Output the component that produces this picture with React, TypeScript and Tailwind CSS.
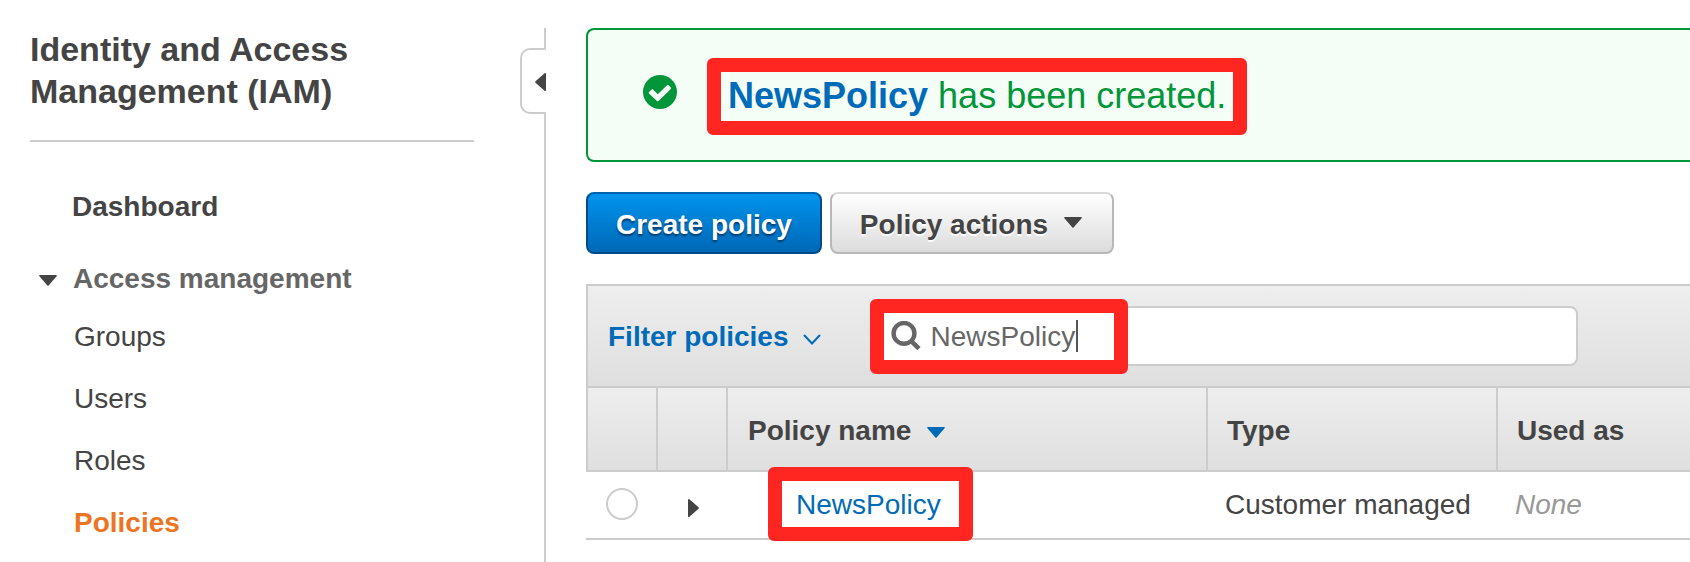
import { useState } from "react";
import clsx from "clsx";

type Direction = "down" | "left" | "right";

const NAV_ITEMS = ["Groups", "Users", "Roles", "Policies"];

const POLICIES = [{ name: "NewsPolicy", type: "Customer managed", usedAs: "None" }];

function Caret({ direction = "down", className }: { direction?: Direction; className?: string }) {
    if (direction === "down") {
        return (
            <svg aria-hidden="true" viewBox="0 0 18 11" className={clsx("h-[11px] w-[18px] shrink-0", className)} fill="currentColor">
                <path d="M0.8 0H17.2Q18.3 0.3 17.6 1.2L9.8 10.2Q9 11.2 8.2 10.2L0.4 1.2Q-0.3 0.3 0.8 0Z" />
            </svg>
        );
    }
    return (
        <svg aria-hidden="true" viewBox="0 0 11 18" className={clsx("h-[18px] w-[11px] shrink-0", direction === "left" && "rotate-180", className)} fill="currentColor">
            <path d="M0 0.6Q0.6 -0.3 1.4 0.3L10.5 8.3Q11.2 9 10.5 9.7L1.4 17.7Q0.6 18.3 0 17.4Z" />
        </svg>
    );
}

function CheckCircle() {
    return (
        <svg aria-hidden="true" viewBox="0 0 34 34" className="h-[34px] w-[34px] shrink-0">
            <circle cx="17" cy="17" r="17" fill="#009639" />
            <path
                d="M5.9 17.2L8.6 14.4Q9.3 13.8 10 14.4L14.8 19.2L24 10.2Q24.8 9.5 25.6 10.2L27.8 12.5Q28.4 13.2 27.8 13.9L15.6 26.1Q14.8 26.8 14 26.1L5.9 18.5Q5.3 17.8 5.9 17.2Z"
                fill="#f5fdf7"
            />
        </svg>
    );
}

function SearchIcon() {
    return (
        <svg aria-hidden="true" viewBox="0 0 30 30" className="h-[30px] w-[30px]" fill="none" stroke="#666">
            <circle cx="13" cy="12.4" r="10.4" strokeWidth="4.4" />
            <path d="M19.8 19.6L28 27.6" strokeWidth="4.6" />
        </svg>
    );
}

// Red marker frame drawn over the content it points at
function Marker({ className }: { className: string }) {
    return <span aria-hidden="true" className={clsx("pointer-events-none absolute rounded-md border-14 border-[#ff2520]", className)} />;
}

function Sidebar() {
    return (
        <aside className="relative w-[546px] shrink-0 border-r-2 border-[#ccc] pl-[30px]">
            <h1 className="w-[444px] border-b-2 border-[#ccc] pb-7 text-[34px] leading-[42px] font-bold">
                Identity and Access Management (IAM)
            </h1>
            <nav className="pt-[49px] leading-8">
                <a href="#dashboard" className="ml-[42px] block font-bold">Dashboard</a>
                <button type="button" className="mt-10 flex items-center gap-4 pl-[9px] font-bold text-[#666]">
                    <Caret className="mt-0.5 text-[#444]" />
                    Access management
                </button>
                <ul className="mt-[26px] ml-11 flex flex-col gap-[30px]">
                    {NAV_ITEMS.map(item => (
                        <li key={item}>
                            <a
                                href={`#${item.toLowerCase()}`}
                                className={item === "Policies" ? "font-bold text-[#ec7523]" : undefined}
                            >
                                {item}
                            </a>
                        </li>
                    ))}
                </ul>
            </nav>
            <button
                type="button"
                aria-label="Collapse menu"
                className="absolute top-5 -right-0.5 flex h-[66px] w-[26px] items-center justify-end rounded-l-[10px] border-2 border-r-0 border-[#ccc] bg-white pt-0.5"
            >
                <Caret direction="left" />
            </button>
        </aside>
    );
}

function SuccessAlert() {
    return (
        <div role="status" className="flex h-[134px] items-center rounded-l-lg border-2 border-r-0 border-[#009639] bg-[#f5fdf7] pl-[55px] text-4xl leading-10 text-[#009639]">
            <div className="pb-1.5">
                <CheckCircle />
            </div>
            <p className="relative mt-0.5 ml-[51px]">
                <a href="#newspolicy" className="font-bold text-[#006bb8]">NewsPolicy</a> has been created.
                <Marker className="-inset-x-[21px] -top-[18px] -bottom-[19px]" />
            </p>
        </div>
    );
}

function PolicyToolbar({ query, onQueryChange }: { query: string; onQueryChange: (q: string) => void }) {
    return (
        <div className="flex h-[104px] items-center border-2 border-r-0 border-[#ccc] bg-linear-to-b from-[#eee] to-[#dfdfdf] pl-5">
            <button type="button" className="flex items-center gap-[14px] pt-0.5 font-bold text-[#006bb8]">
                Filter policies
                <svg aria-hidden="true" viewBox="0 0 18 11" className="mt-1 h-[11px] w-[18px]" fill="none" stroke="currentColor" strokeWidth="2">
                    <path d="M1 1L9 9.5L17 1" />
                </svg>
            </button>
            <div className="relative ml-[54px] w-[703px]">
                <input
                    type="text"
                    aria-label="Search policies"
                    value={query}
                    onChange={e => onQueryChange(e.target.value)}
                    className="h-[60px] w-full rounded-lg border-2 border-[#ccc] bg-white pt-0.5 pl-[54px] text-[#666] outline-none"
                />
                <span className="pointer-events-none absolute inset-y-0 left-4 flex items-center">
                    <SearchIcon />
                    {/* text cursor sits right after the typed query */}
                    <span aria-hidden="true" className="ml-[155px] h-8 w-0.5 bg-[#555]" />
                </span>
                <Marker className="-top-[7px] -left-[5px] h-[75px] w-[258px]" />
            </div>
        </div>
    );
}

function PolicyTable() {
    const thCls = "h-[84px] border-b-2 border-[#ccc] bg-linear-to-b from-[#eee] to-[#dfdfdf] pt-1 text-left font-bold";
    const tdCls = "h-[68px] border-b-2 border-[#ccc]";

    return (
        <table className="w-full table-fixed border-separate border-spacing-0">
            <colgroup>
                <col className="w-[72px]" />
                <col className="w-[70px]" />
                <col className="w-[480px]" />
                <col className="w-[290px]" />
                <col />
            </colgroup>
            <thead>
                <tr>
                    <th className={clsx(thCls, "border-x-2")} aria-label="Select" />
                    <th className={clsx(thCls, "border-r-2")} aria-label="Expand" />
                    <th className={clsx(thCls, "border-r-2 pl-5")}>
                        <button type="button" className="flex items-center gap-4">
                            Policy name
                            <Caret className="mt-0.5 text-[#006bb8]" />
                        </button>
                    </th>
                    <th className={clsx(thCls, "border-r-2 pl-[19px]")}>Type</th>
                    <th className={clsx(thCls, "pl-[19px]")}>Used as</th>
                </tr>
            </thead>
            <tbody>
                {POLICIES.map(policy => (
                    <tr key={policy.name}>
                        <td className={clsx(tdCls, "pb-0.5 pl-5")}>
                            <input
                                type="radio"
                                name="policy"
                                aria-label={`Select ${policy.name}`}
                                className="block h-8 w-8 appearance-none rounded-full border-2 border-[#ccc] bg-white checked:border-8"
                            />
                        </td>
                        <td className={clsx(tdCls, "pl-[30px]")}>
                            <button type="button" aria-label={`Expand ${policy.name}`} className="block pt-1.5">
                                <Caret direction="right" />
                            </button>
                        </td>
                        <td className={clsx(tdCls, "pl-[68px]")}>
                            <span className="relative inline-block">
                                <a href="#newspolicy" className="text-[#006bb8]">{policy.name}</a>
                                <Marker className="-top-[22px] -right-8 -bottom-5 -left-7" />
                            </span>
                        </td>
                        <td className={clsx(tdCls, "pl-[17px]")}>{policy.type}</td>
                        <td className={clsx(tdCls, "pl-[17px] text-[#999] italic")}>{policy.usedAs}</td>
                    </tr>
                ))}
            </tbody>
        </table>
    );
}

export default function App() {
    const [query, setQuery] = useState("NewsPolicy");

    return (
        <div className="flex min-h-screen bg-white pt-7 font-['Liberation_Sans',Arial,sans-serif] text-[28px] leading-8 text-[#444]">
            <Sidebar />
            <main className="min-w-0 flex-1 pl-10">
                <SuccessAlert />
                <div className="my-[30px] flex gap-2">
                    <button
                        type="button"
                        className="h-[62px] rounded-lg border-2 border-[#004b87] border-t-[#0063ad] bg-linear-to-b from-[#0094ee] to-[#0068b6] px-7 pt-1 font-bold text-white text-shadow-[0_2px_2px_#003a6b]"
                    >
                        Create policy
                    </button>
                    <button
                        type="button"
                        className="flex h-[62px] items-center gap-4 rounded-lg border-2 border-[#b8b8b8] border-t-[#d9d9d9] bg-linear-to-b from-white to-[#dcdcdc] pr-[30px] pl-7 pt-1 font-bold text-shadow-[0_2px_1px_#fff]"
                    >
                        Policy actions
                        <Caret className="-mt-1.5" />
                    </button>
                </div>
                <PolicyToolbar query={query} onQueryChange={setQuery} />
                <PolicyTable />
            </main>
        </div>
    );
}
